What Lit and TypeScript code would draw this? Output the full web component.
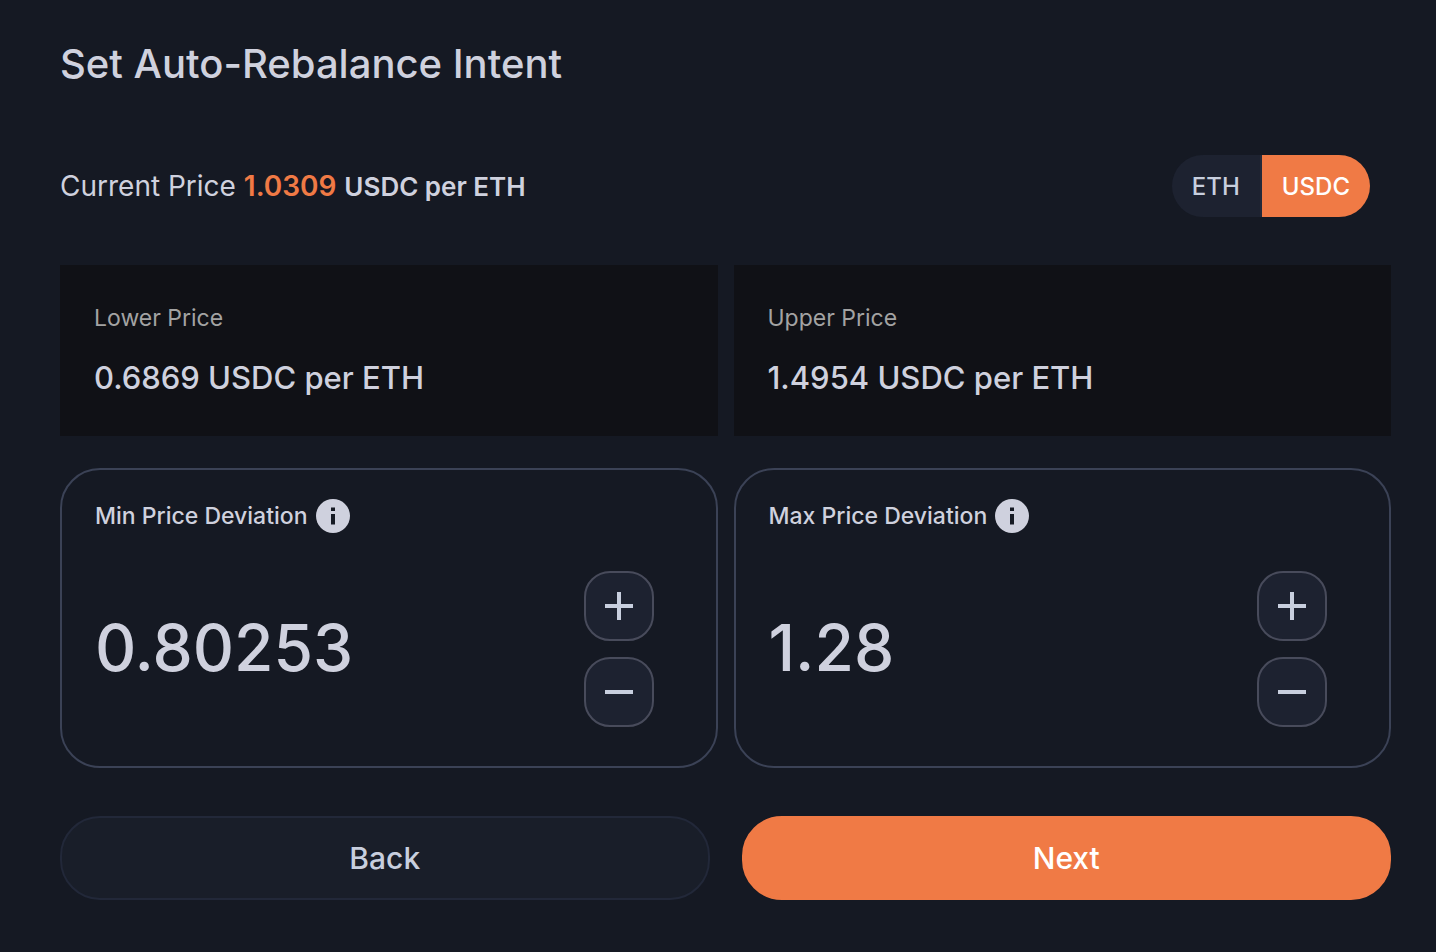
import { LitElement, html, css, svg } from "lit";
import { customElement, property, state } from "lit/decorators.js";

const UNIT = "USDC per ETH";

const plusIcon = svg`<path d="M0 14h28M14 0v28" />`;
const minusIcon = svg`<path d="M0 14h28" />`;

@customElement("price-card")
export class PriceCard extends LitElement {
  @property() label = "";
  @property() value = "";

  static styles = css`
    :host {
      display: block;
      box-sizing: border-box;
      padding: 36px 34px;
      background: #101116;
    }
    .label {
      margin: 0;
      color: #a3a3a3;
      font-size: 23px;
      line-height: 34px;
    }
    .value {
      margin: 20px 0 0;
      color: #cfd1de;
      font-size: 31px;
      font-weight: 500;
      line-height: 45px;
    }
  `;

  render() {
    return html`
      <p class="label">${this.label}</p>
      <p class="value">${this.value} ${UNIT}</p>
    `;
  }
}

@customElement("deviation-field")
export class DeviationField extends LitElement {
  @property() label = "";
  @property() value = "";

  static styles = css`
    :host {
      display: block;
      box-sizing: border-box;
      padding: 29px 62px 39px 33px;
      border: 2px solid #3b4256;
      border-radius: 40px;
    }
    .head {
      display: flex;
      align-items: center;
      gap: 8px;
      color: #cfd1de;
    }
    .label {
      font-size: 23px;
      font-weight: 500;
      line-height: 34px;
    }
    .info {
      display: block;
      width: 34px;
      height: 34px;
    }
    .body {
      display: flex;
      align-items: center;
      gap: 16px;
      margin-top: 38px;
    }
    .amount {
      flex: 1;
      width: 100%;
      min-width: 0;
      box-sizing: border-box;
      height: 80px;
      padding: 0 0 4px;
      border: 0;
      outline: 0;
      background: none;
      color: #cfd1de;
      font-family: inherit;
      font-size: 64px;
      font-weight: 500;
    }
    .steps {
      display: grid;
      gap: 16px;
    }
    .step {
      display: grid;
      place-items: center;
      width: 70px;
      height: 70px;
      padding: 0;
      border: 2px solid #484b5b;
      border-radius: 26px;
      background: #1d2230;
      color: #c8cfde;
      cursor: pointer;
    }
    .glyph {
      display: block;
      width: 28px;
      height: 28px;
      fill: none;
      stroke: currentColor;
      stroke-width: 4;
    }
  `;

  private shift(delta: number) {
    this.value = String(Number((Number(this.value) + delta).toFixed(5)));
  }

  render() {
    return html`
      <div class="head">
        <label class="label" for="amount">${this.label}</label>
        <svg class="info" viewBox="0 0 34 34" aria-hidden="true">
          <circle cx="17" cy="17" r="17" fill="#cfd1de" />
          <path d="M15 8.500h4v3.500h-4zM15 15h4v10.500h-4z" fill="#161a24" />
        </svg>
      </div>
      <div class="body">
        <input
          class="amount"
          id="amount"
          inputmode="decimal"
          .value=${this.value}
          @change=${(e: Event) => (this.value = (e.target as HTMLInputElement).value)}
        />
        <div class="steps">
          <button class="step" type="button" aria-label="Increase" @click=${() => this.shift(0.01)}>
            <svg class="glyph" viewBox="0 0 28 28">${plusIcon}</svg>
          </button>
          <button class="step" type="button" aria-label="Decrease" @click=${() => this.shift(-0.01)}>
            <svg class="glyph" viewBox="0 0 28 28">${minusIcon}</svg>
          </button>
        </div>
      </div>
    `;
  }
}

@customElement("app-root")
export class AppRoot extends LitElement {
  @state() private token = "USDC";

  static styles = css`
    :host {
      display: block;
      box-sizing: border-box;
      min-height: 100vh;
      padding: 36px 45px 52px 60px;
      background: #151923;
      color: #cfd1de;
      font-family: Inter, "Liberation Sans", sans-serif;
    }
    .title {
      margin: 0;
      font-size: 40px;
      font-weight: 500;
      line-height: 56px;
    }
    .current {
      display: flex;
      align-items: center;
      justify-content: space-between;
      margin-top: 63px;
      padding-right: 21px;
    }
    .price {
      margin: 0;
      font-size: 28px;
      line-height: 40px;
    }
    .rate {
      color: #f07a45;
      font-weight: 600;
    }
    .unit {
      font-size: 26px;
      font-weight: 600;
    }
    .toggle {
      display: flex;
      overflow: hidden;
      border-radius: 31px;
    }
    .token {
      height: 62px;
      padding: 0 20px;
      border: 0;
      background: #1d2230;
      color: #c8cfde;
      font-family: inherit;
      font-size: 24px;
      font-weight: 500;
      cursor: pointer;
    }
    .token:first-child {
      border-right: 2px solid #242a3a;
    }
    .token.on {
      background: #f07a45;
      color: #ffffff;
    }
    .grid {
      display: grid;
      grid-template-columns: repeat(2, minmax(0, 1fr));
      gap: 32px 16px;
      margin-top: 48px;
    }
    .actions {
      display: grid;
      grid-template-columns: repeat(2, minmax(0, 1fr));
      gap: 32px;
      margin-top: 48px;
    }
    .action {
      height: 84px;
      border: 2px solid #222839;
      border-radius: 40px;
      background: #191e29;
      color: #c8cfde;
      font-family: inherit;
      font-size: 30px;
      font-weight: 500;
      cursor: pointer;
    }
    .action.primary {
      border-color: #f07a45;
      background: #f07a45;
      color: #ffffff;
    }
  `;

  private renderToken(name: string) {
    const on = this.token === name;
    return html`<button
      class="token ${on ? "on" : ""}"
      type="button"
      aria-pressed=${on ? "true" : "false"}
      @click=${() => (this.token = name)}
    >${name}</button>`;
  }

  render() {
    return html`
      <h1 class="title">Set Auto-Rebalance Intent</h1>
      <div class="current">
        <p class="price">
          Current Price <span class="rate">1.0309</span>
          <span class="unit">${UNIT}</span>
        </p>
        <div class="toggle">${this.renderToken("ETH")}${this.renderToken("USDC")}</div>
      </div>
      <div class="grid">
        <price-card label="Lower Price" value="0.6869"></price-card>
        <price-card label="Upper Price" value="1.4954"></price-card>
        <deviation-field label="Min Price Deviation" value="0.80253"></deviation-field>
        <deviation-field label="Max Price Deviation" value="1.28"></deviation-field>
      </div>
      <div class="actions">
        <button class="action" type="button">Back</button>
        <button class="action primary" type="button">Next</button>
      </div>
    `;
  }
}
